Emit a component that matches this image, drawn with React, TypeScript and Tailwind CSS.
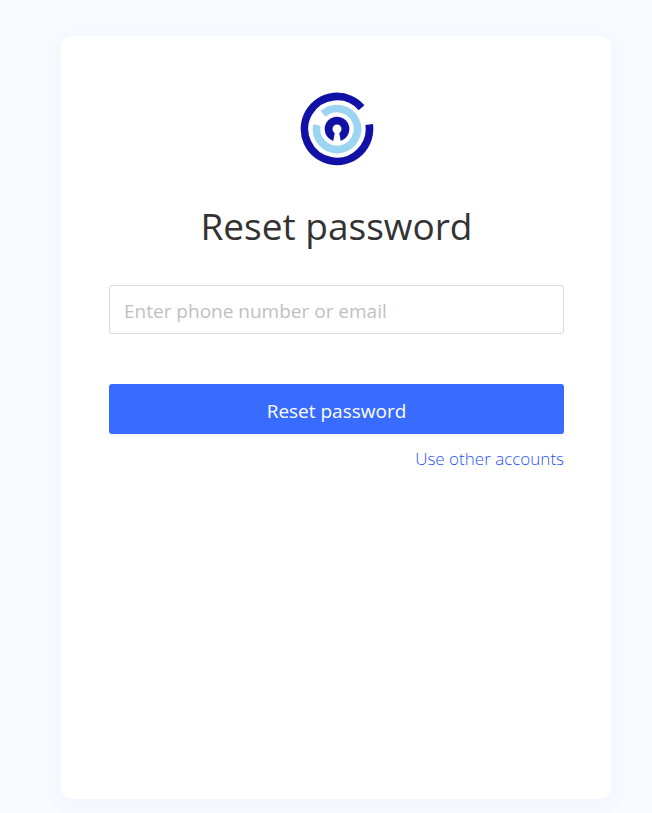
function Logo() {
  return (
    <svg viewBox="-111 -111 222 222" className="size-[74px]" role="img" aria-label="Logo" fill="none">
      <path d="M73.6 -64 A97.5 97.5 0 1 0 96.5 -13.6" stroke="#1111a6" strokeWidth="23" />
      <path d="M-41.5 -45.3 A61.5 61.5 0 1 1 -60.4 -11.7" stroke="#9bd5f2" strokeWidth="23" />
      <circle r="37" fill="#1111a6" />
      <circle r="13.5" fill="#fff" />
      <path d="M-6 8 H6 L12 40 H-12 Z" fill="#fff" />
    </svg>
  );
}

export default function App() {
  return (
    <div className="flex min-h-screen justify-center bg-[#f8faff] pt-9 pr-[41px] pb-3.5 pl-[61px] font-['Open_Sans','Noto_Sans',sans-serif]">
      <main className="flex min-h-[763px] w-full max-w-[550px] flex-col rounded-xl bg-white pt-14 pr-[47px] pb-12 pl-12 shadow-[0_4px_20px_#eff3ff]">
        <header className="flex flex-col items-center">
          <Logo />
          <h1 className="mt-9 text-[37px] leading-12 font-normal text-[#333]">Reset password</h1>
        </header>
        <form className="mt-[35px] flex flex-col" onSubmit={(e) => e.preventDefault()}>
          <input
            type="text"
            aria-label="Phone number or email"
            placeholder="Enter phone number or email"
            className="h-[49px] w-full rounded-[3px] border border-[#d9d9d9] px-3.5 pt-0.5 text-[19px] text-[#333] outline-none placeholder:text-[#bfbfbf] focus:border-[#386bff]"
          />
          <button
            type="submit"
            className="mt-[50px] h-[50px] w-full cursor-pointer rounded-[3px] bg-[#386bff] pt-1 text-[19px] text-white shadow-[0_2px_0_rgba(0,0,0,0.04)]"
          >
            Reset password
          </button>
          <a href="#accounts" className="mt-3 self-end text-[17px] leading-[26px] font-light text-[#1f54f5]">
            Use other accounts
          </a>
        </form>
      </main>
    </div>
  );
}
